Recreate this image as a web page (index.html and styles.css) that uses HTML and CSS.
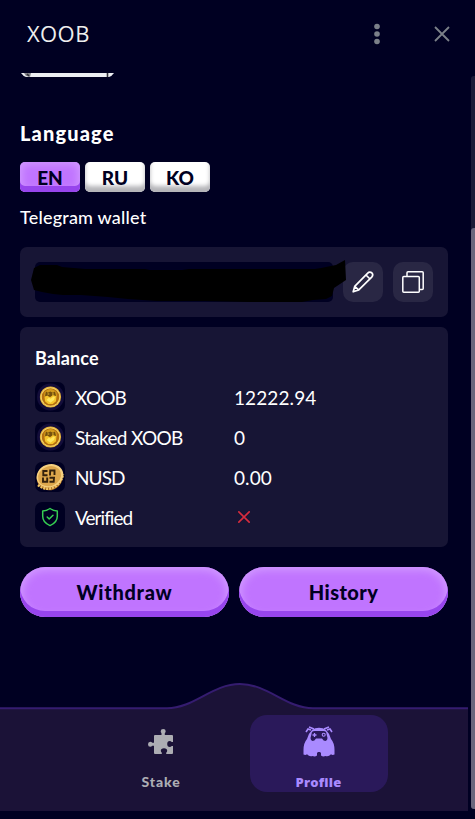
FILE: index.html
```html
<!DOCTYPE html>
<html lang="en">
<head>
    <meta charset="UTF-8">
    <meta name="viewport" content="width=device-width, initial-scale=1.0">
    <title>XOOB</title>
    <link rel="stylesheet" href="styles.css">
</head>
<body>
    <svg class="symbols" width="0" height="0">
        <symbol id="coin" viewBox="0 0 30 30">
            <circle cx="15.5" cy="15" r="13.5" fill="#251a52" opacity="0.5"/>
            <circle cx="15.5" cy="15" r="10.6" fill="#e6b53c"/>
            <circle cx="15.5" cy="15" r="9.6" fill="#f7db70"/>
            <circle cx="15.5" cy="15" r="8.8" fill="#b5700f"/>
            <path d="M9.500 10.500q2.500-3.500 6-3.500t6 3.500l.5 4H9z" fill="#d19a1c"/>
            <path d="M11 9.500l1.800 1.300 2.500-1.200 2.600 1.200L20 9.500l1 4.200-2.500 1H12.300l-2.300-1z" fill="#75500e"/>
            <path d="M12.500 12h1.800M17 12h1.800" stroke="#e9bd2e" stroke-width="1.200"/>
            <path d="M9.500 15l2.800-1.500 2.700 2 2.800-2.500 3.700 1.300-.5 5-3.300 2.700h-4.500l-3.200-2.700z" fill="#f5c52c"/>
            <path d="M11.500 18l2.500-2.500 1.500 1.200 3-2.200 1.500.5-1 3-3.500 2.700z" fill="#ffe760"/>
        </symbol>
    </svg>

    <header class="header">
        <h1>XOOB</h1>
        <svg class="menu" width="6" height="22" viewBox="0 0 6 22" fill="#7b8089">
            <circle cx="3" cy="3.500" r="2.800"/>
            <circle cx="3" cy="11" r="2.800"/>
            <circle cx="3" cy="18.500" r="2.800"/>
        </svg>
        <svg class="close" width="16" height="16" viewBox="0 0 16 16" stroke="#7b8089" stroke-width="1.800">
            <path d="M1 1l14 14M15 1L1 15"/>
        </svg>
    </header>

    <main class="content">
        <div class="avatar">
            <svg width="94" height="4" viewBox="0 0 94 4">
                <path d="M0 0h93q-2 3-5 4H5Q2 3 0 0z" fill="#eceef2"/>
                <path d="M3 0l2 3 4 1 1-4z" fill="#85858a"/>
                <path d="M6 1l2 2M86.500 0v4" stroke="#303038" stroke-width="1.600"/>
            </svg>
        </div>
        <h2 class="title">Language</h2>
        <div class="languages">
            <button class="lang active">EN</button>
            <button class="lang">RU</button>
            <button class="lang">KO</button>
        </div>
        <h3 class="subtitle">Telegram wallet</h3>

        <section class="card wallet">
            <div class="address">
                <svg class="marker" width="316" height="43" viewBox="0 0 316 43">
                    <path d="M0 20L3 8 9 5h17l5 2 23 2h60l5 1h32l7-1h126q7-1 11-2l10-2 9-5 1 20-12 8-2 8-6 3-13 1-11 2h-52l-45-1h-48l-29-2-20-2-27-2H32l-10-1-11-2-8-2z"/>
                </svg>
            </div>
            <button class="icon-btn">
                <svg width="22" height="22" viewBox="0 0 22 22" fill="none" stroke="#fff" stroke-width="1.700" stroke-linejoin="round" stroke-linecap="round">
                    <path d="M1.200 20.800l1.500-5.400L15.500 2.300q2-2.100 4.300-.5 1.900 2-.1 4.300L6.800 18.900zM14 4l4 4M2.700 15.500l3.900 3.400"/>
                </svg>
            </button>
            <button class="icon-btn">
                <svg width="22" height="22" viewBox="0 0 22 22" fill="none" stroke="#fff" stroke-width="1.500" stroke-linejoin="round">
                    <rect x=".8" y="5.500" width="16.500" height="15.700" rx="1"/>
                    <path d="M5 5.500V1.800q0-1 1-1h14.200q1 0 1 1v15.700q0 1-1 1h-3"/>
                </svg>
            </button>
        </section>

        <section class="card balance">
            <h3>Balance</h3>
            <div class="row">
                <svg class="badge" viewBox="0 0 30 30"><use href="#coin"/></svg>
                <span class="name xoob">XOOB</span>
                <span class="amount">12222.94</span>
            </div>
            <div class="row">
                <svg class="badge" viewBox="0 0 30 30"><use href="#coin"/></svg>
                <span class="name staked">Staked XOOB</span>
                <span class="amount">0</span>
            </div>
            <div class="row">
                <svg class="badge" viewBox="0 0 30 30">
                    <ellipse cx="14.300" cy="16" rx="13" ry="12.300" fill="#a96a20" transform="rotate(-20 14 15)"/>
                    <path d="M3 23q9 7 18 1 6-5 7-12" fill="none" stroke="#f0c565" stroke-width="2.500" stroke-dasharray="2 1"/>
                    <ellipse cx="15" cy="13.800" rx="13.600" ry="11.400" fill="#f5d080" transform="rotate(-20 15 14)"/>
                    <ellipse cx="14.500" cy="14" rx="11.800" ry="9.800" fill="#dda74c" transform="rotate(-20 15 14)"/>
                    <path d="M12.500 9H8.300v4.200h4.200M15 13.500l.2-5h4.300v4.500M8 15.500v4.300h4.200v-4.300M14.500 15.700H19l-.3 4h-4.200" fill="none" stroke="#33210c" stroke-width="1.900"/>
                </svg>
                <span class="name nusd">NUSD</span>
                <span class="amount">0.00</span>
            </div>
            <div class="row">
                <svg class="badge" viewBox="0 0 30 30" fill="none" stroke="#35cf52" stroke-width="1.500" stroke-linejoin="round" stroke-linecap="round">
                    <path d="M15 6.500q3.500 2.600 7.300 2.600v5.200q0 6.300-7.300 9.300-7.300-3-7.300-9.300V9.100q3.800 0 7.300-2.600z"/>
                    <path d="M12.200 15l2 2 3.800-3.800"/>
                </svg>
                <span class="name verified">Verified</span>
                <svg class="cross" width="12" height="12" viewBox="0 0 12 12" stroke="#d62c3e" stroke-width="1.600">
                    <path d="M.3.300l11.400 11.400M11.700.3L.3 11.700"/>
                </svg>
            </div>
        </section>

        <div class="actions">
            <button class="action">Withdraw</button>
            <button class="action history">History</button>
        </div>
    </main>

    <nav class="nav">
        <svg class="nav-bg" width="468" height="128" viewBox="0 0 468 128">
            <path d="M0 25.500h167C194 25.500 212 1 240 1s46 24.500 73 24.500h155V128H0z" fill="#1b1237"/>
            <path d="M0 25.200h167C194 25.200 212 1 240 1s46 24.200 73 24.200h155" fill="none" stroke="#351c70" stroke-width="2"/>
        </svg>
        <div class="tabs">
            <a class="tab">
                <svg width="26" height="26" viewBox="0 0 26 26" fill="#adadb3">
                    <path d="M7 6h6.500V4.300Q12.700 3.500 12.700 2.300q0-2.300 2.500-2.300t2.500 2.300q0 1.200-.9 2V6H24q1 0 1 1v6h-1.300q-.7-1-2-1-2.500 0-2.500 3t2.500 3q1.300 0 2-1H25v7q0 1-1 1h-5.800v-1.300q1-.7 1-1.900 0-2.500-3.200-2.500t-3.200 2.500q0 1.200 1 1.900V25H7q-1 0-1-1v-7.200H4.300q-.8 1-2 1-2.300 0-2.300-2.500t2.300-2.500q1.200 0 2 .9H6V7q0-1 1-1z"/>
                </svg>
                <span>Stake</span>
            </a>
            <a class="tab selected">
                <svg width="32" height="31" viewBox="0 0 32 31">
                    <path d="M9 4q3-2.300 7-2.300T23 4q4 4 5 9 3.500 4 3.500 11v4.500q-2 1-3.500-.2-2.500 2.700-5.500 1.700-2.500 1-4.500-.5v-2.500l-1-1h-2l-1 1v2.500q-2 1.500-4.500.5-3 1-5.500-1.700-1.500 1.200-3.500.2V24q0-7 3.500-11Q5 8 9 4z" fill="#a98aff"/>
                    <path d="M8.500 8q0-3 3-3h9q3 0 3 3l1 4q0 2.500-2 3-2 0-3.500-2.500h-6q-1.500 2.500-3.500 2.500-2-.5-2-3z" fill="#2a195a"/>
                    <path d="M3 6l2-3 3 1M6 1l5 2M29 6l-2-3-3 1M26 1l-5 2" fill="none" stroke="#a98aff" stroke-width="1.600"/>
                    <path d="M11.500 7v4m-2-2h4" stroke="#a98aff" stroke-width="1.300"/>
                    <circle cx="20.700" cy="8.800" r="1.500" fill="none" stroke="#a98aff" stroke-width="1.100"/>
                </svg>
                <span>Profile</span>
            </a>
        </div>
    </nav>
    <div class="scrollbar"><div class="thumb"></div></div>
</body>
</html>
```

FILE: styles.css
```css
* {
    box-sizing: border-box;
}

body {
    margin: 0;
    height: 819px;
    overflow: hidden;
    background-color: #000022;
    color: #fff;
    font-family: Lato, sans-serif;
    font-size: 19px;
}

h1, h2, h3 {
    margin: 0;
}

button {
    padding: 0;
    border: none;
    color: #000022;
    font-family: inherit;
    cursor: pointer;
}

.symbols {
    display: none;
}

.header {
    display: flex;
    align-items: center;
    height: 73px;
    padding: 0 25px 7px 27px;
}

.header h1 {
    flex: 1;
    color: #eee;
    font: 400 22px "Open Sans", sans-serif;
    letter-spacing: 0.4px;
}

.menu {
    margin: 1px 54px 0 0;
}

.close {
    margin-top: 1px;
}

.content {
    height: 610px;
    padding-left: 20px;
    width: 448px;
}

.avatar {
    height: 4px;
}

.avatar svg {
    display: block;
    margin-left: 1px;
}

.title {
    margin-top: 42px;
    height: 43px;
    font-size: 20px;
    font-weight: 900;
    letter-spacing: 1.15px;
    line-height: 28px;
}

.languages {
    display: flex;
    gap: 5px;
}

.lang {
    width: 60px;
    height: 30px;
    border-radius: 5px;
    background-color: #fff;
    box-shadow: inset 0 -6px 4px #b5b5b9;
    font-size: 19px;
    font-weight: 900;
    line-height: 31px;
}

.lang.active {
    background-color: #c074ff;
    box-shadow: inset 0 -6px 0 #9745ed, inset 0 0 8px 2px #d29bff;
}

.subtitle {
    height: 55px;
    padding-top: 11px;
    font-size: 18px;
    font-weight: 500;
    letter-spacing: 0.2px;
    line-height: 28px;
}

.card {
    padding: 15px;
    border-radius: 7px;
    background-color: #171535;
}

.wallet {
    display: flex;
    gap: 10px;
    height: 70px;
}

.address {
    position: relative;
    flex: 1;
    border-radius: 5px;
    background-color: #000022;
}

.marker {
    position: absolute;
    left: -4px;
    top: -2px;
    z-index: 1;
}

.icon-btn {
    display: flex;
    align-items: center;
    justify-content: center;
    width: 40px;
    height: 40px;
    border-radius: 10px;
    background-color: #292744;
}

.balance {
    display: flex;
    flex-direction: column;
    gap: 10px;
    height: 220px;
    margin-top: 10px;
}

.balance h3 {
    height: 30px;
    font-size: 18px;
    font-weight: 700;
    letter-spacing: 0.15px;
    line-height: 32px;
}

.row {
    display: grid;
    grid-template-columns: 40px 159px 1fr;
    align-items: center;
    height: 30px;
}

.xoob {
    letter-spacing: -0.9px;
}

.staked {
    letter-spacing: -0.7px;
}

.nusd {
    letter-spacing: -0.9px;
}

.verified {
    letter-spacing: -0.95px;
}

.amount {
    letter-spacing: 0.1px;
}

.badge {
    width: 30px;
    height: 30px;
    border-radius: 7px;
    background-color: #000022;
}

.cross {
    margin-left: 4px;
}

.actions {
    display: flex;
    gap: 10px;
    margin-top: 20px;
}

.action {
    flex: 1;
    height: 50px;
    border-radius: 25px;
    background-color: #c074ff;
    box-shadow: inset 0 -6px 0 #9745ed, inset 0 1px 8px 2px #d29bff;
    font-size: 20px;
    font-weight: 900;
    letter-spacing: 0.7px;
    line-height: 51px;
}

.history {
    letter-spacing: 0.4px;
}

.nav {
    display: grid;
    width: 468px;
    height: 128px;
}

.nav-bg, .tabs {
    grid-area: 1 / 1;
}

.tabs {
    display: flex;
    gap: 20px;
    padding: 32px 0 0 92px;
}

.tab {
    display: flex;
    flex-direction: column;
    align-items: center;
    width: 138px;
    height: 77px;
    padding-top: 14px;
    border-radius: 17px;
    color: #adadb3;
    font-size: 14px;
    font-weight: 900;
    letter-spacing: 0.9px;
}

.tab svg {
    height: 26px;
}

.tab span {
    margin-top: 17px;
    line-height: 20px;
}

.tab.selected {
    padding-top: 11px;
    padding-right: 1px;
    background-color: #2a195a;
    color: #a98aff;
    font-family: "Open Sans", sans-serif;
    font-size: 13px;
    font-weight: 800;
    letter-spacing: 0.2px;
}

.selected svg {
    height: 31px;
}

.selected span {
    margin-top: 15px;
}

.scrollbar {
    position: fixed;
    top: 76px;
    right: 0;
    width: 4px;
    height: 733px;
    padding-top: 152px;
    border-radius: 3px 0 0 3px;
    background-color: #1b1a37;
}

.thumb {
    height: 581px;
    border-radius: 3px 0 0 3px;
    background-color: #6a667d;
}
```
